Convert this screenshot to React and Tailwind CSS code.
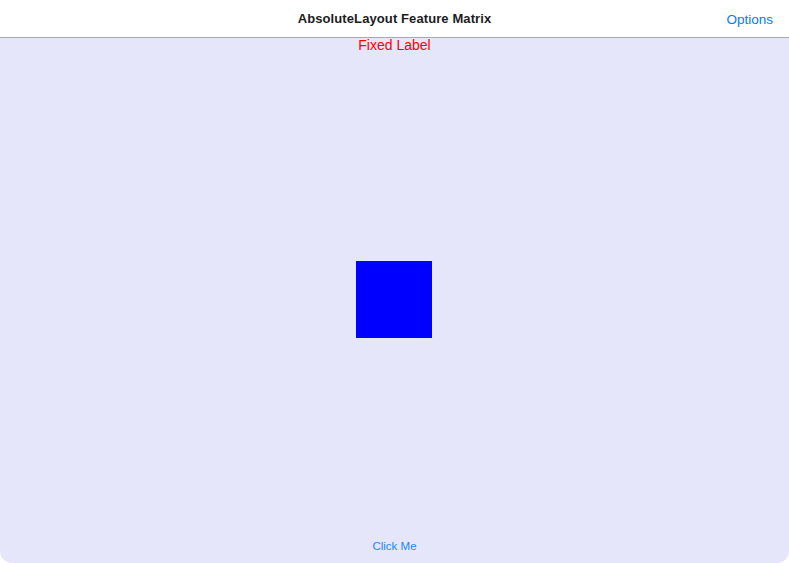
export default function App() {
  return (
    <div className="w-[789px] h-[563px] bg-white flex flex-col font-['Liberation_Sans',Arial,sans-serif]">
      <div className="h-[38px] shrink-0 flex items-center justify-center relative border-b border-[#a9a9ad] bg-white">
        <span className="text-[13px] font-semibold text-[#1c1c1e] tracking-[0.1px]">AbsoluteLayout Feature Matrix</span>
        <button className="absolute right-[16px] top-[10px] text-[13.5px] text-[#007aff]">Options</button>
      </div>
      <div className="flex-1 bg-[#e6e6fa] rounded-b-[12px] grid grid-rows-[1fr_auto_1fr] justify-items-center">
        <span className="self-start text-[14px] text-[#ff0000] leading-[17px] mt-[-1px]">Fixed Label</span>
        <div className="w-[76px] h-[77px] mr-[1px] mb-[2px] bg-[#0000ff]" />
        <button className="self-end mb-[8px] text-[11.5px] font-medium text-[#1a84ff]">Click Me</button>
      </div>
    </div>
  );
}
